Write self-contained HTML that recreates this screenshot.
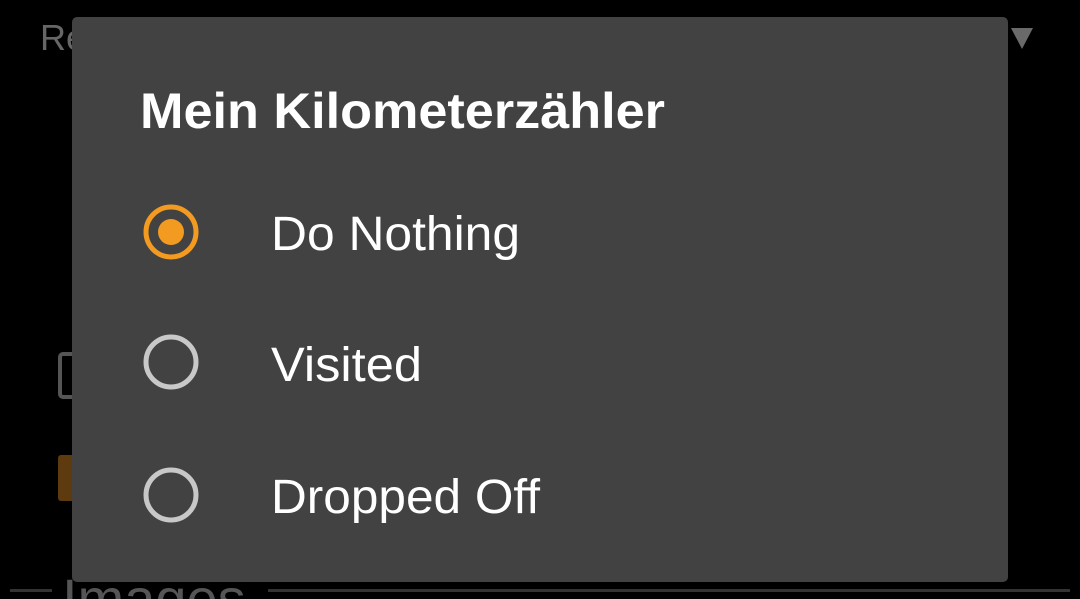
<!DOCTYPE html>
<html><head><meta charset="utf-8"><style>
html,body{margin:0;padding:0;background:#000;width:1080px;height:599px;overflow:hidden}
svg{display:block}
text{font-family:"Liberation Sans",sans-serif}
</style></head><body>
<svg width="1080" height="599" viewBox="0 0 1080 599" xmlns="http://www.w3.org/2000/svg">
<rect width="1080" height="599" fill="#000"/>
<text x="40" y="50" font-size="36" fill="#666">Re</text>
<polygon points="1011,28 1033,28 1022,49" fill="#6a6a6a"/>
<rect x="60" y="354" width="40" height="43" rx="3" fill="none" stroke="#555" stroke-width="4"/>
<rect x="58" y="455" width="40" height="46" rx="3" fill="#5e3b0f"/>
<text x="62" y="618" font-size="56" fill="#555">Images</text>
<rect x="10" y="589" width="42" height="3" fill="#333"/>
<rect x="268" y="589" width="802" height="3" fill="#333"/>
<rect x="72" y="17" width="936" height="565" rx="5" fill="#424242"/>
<text x="140" y="128" font-size="50" font-weight="bold" fill="#fff" textLength="525" lengthAdjust="spacingAndGlyphs">Mein Kilometerzähler</text>
<circle cx="171" cy="232" r="25" fill="none" stroke="#f39a21" stroke-width="5"/>
<circle cx="171" cy="232" r="13" fill="#f39a21"/>
<circle cx="171" cy="362" r="25" fill="none" stroke="#c8c8c8" stroke-width="5"/>
<circle cx="171" cy="495" r="25" fill="none" stroke="#c8c8c8" stroke-width="5"/>
<text x="271" y="250" font-size="48" fill="#fff" textLength="249" lengthAdjust="spacingAndGlyphs">Do Nothing</text>
<text x="271" y="381" font-size="48" fill="#fff" textLength="151" lengthAdjust="spacingAndGlyphs">Visited</text>
<text x="271" y="513" font-size="48" fill="#fff" textLength="269" lengthAdjust="spacingAndGlyphs">Dropped Off</text>
</svg>
</body></html>
